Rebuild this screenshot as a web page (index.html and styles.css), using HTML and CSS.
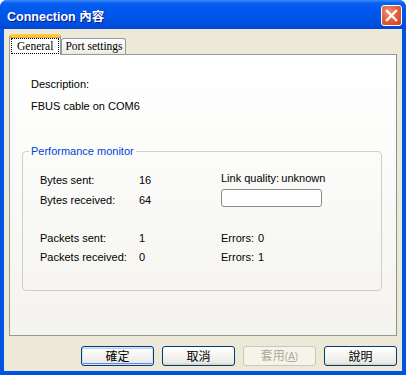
FILE: index.html
```html
<!DOCTYPE html>
<html lang="zh-Hant">
<head>
    <meta charset="UTF-8">
    <title>Connection 內容</title>
    <link rel="stylesheet" href="styles.css">
</head>
<body>

    <div class="window">
        <div class="titlebar">
            <span class="title">Connection 內容</span>
            <button class="close" aria-label="Close">
                <svg width="13" height="13" viewBox="0 0 13 13">
                    <path d="M2 2 L11 11 M11 2 L2 11" stroke="#fff" stroke-width="2.4" stroke-linecap="square"/>
                </svg>
            </button>
        </div>

        <div class="client">
            <div class="tabs">
                <div class="tab active"><span class="focus">General</span></div>
                <div class="tab">Port settings</div>
            </div>

            <div class="panel">
                <p class="line">Description:</p>
                <p class="line desc">FBUS cable on COM6</p>

                <fieldset class="group">
                    <legend>Performance monitor</legend>

                    <div class="section bytes">
                        <div class="pairs">
                            <span>Bytes sent:</span><span>16</span>
                            <span>Bytes received:</span><span>64</span>
                        </div>
                        <div class="quality">
                            <span>Link quality:&thinsp;unknown</span>
                            <div class="meter"></div>
                        </div>
                    </div>

                    <div class="section packets">
                        <div class="pairs">
                            <span>Packets sent:</span><span>1</span>
                            <span>Packets received:</span><span>0</span>
                        </div>
                        <div class="errors">
                            <span><span class="err-label">Errors:</span>0</span>
                            <span><span class="err-label">Errors:</span>1</span>
                        </div>
                    </div>
                </fieldset>
            </div>

            <div class="buttons">
                <button class="btn default">確定</button>
                <button class="btn">取消</button>
                <button class="btn" disabled>套用<span class="key">(<u>A</u>)</span></button>
                <button class="btn">說明</button>
            </div>
        </div>
    </div>

</body>
</html>
```

FILE: styles.css
```css
body {
    margin: 0;
    background: #fff;
    font-family: 'Liberation Sans', Arial, 'Noto Sans CJK TC', sans-serif;
    font-size: 11px;
    color: #000;
}

.window {
    width: 406px;
    height: 375px;
    display: flex;
    flex-direction: column;
    background: #0054e3;
    border-radius: 7px 7px 0 0;
    overflow: hidden;
}

.titlebar {
    height: 29px;
    flex: none;
    display: flex;
    align-items: center;
    justify-content: space-between;
    padding: 0 4px 0 7px;
    background: linear-gradient(#3d8dff 0, #0a5fef 3px, #0058ee 10px, #0054e3 20px, #0048d6 29px);
}

.title {
    color: #fff;
    font-family: 'Liberation Sans', Arial, 'Noto Sans CJK TC', sans-serif;
    font-weight: bold;
    font-size: 12.5px;
    text-shadow: 1px 1px 0 #0a1883;
    margin-top: 1px;
}

.close {
    width: 21px;
    height: 21px;
    padding: 0;
    margin-top: 1px;
    display: flex;
    align-items: center;
    justify-content: center;
    border: 1px solid #fff;
    border-radius: 3px;
    background: radial-gradient(circle at 35% 30%, #f39274 0, #e5603d 45%, #cc4420 100%);
}

.client {
    flex: 1;
    margin: 0 4px 4px;
    padding: 5px 5px 0;
    background: #ece9d8;
    display: flex;
    flex-direction: column;
}

/* tabs */

.tabs {
    display: flex;
    align-items: flex-end;
    height: 21px;
}

.tab {
    box-sizing: border-box;
    height: 17px;
    padding: 0 2px 0 3px;
    font-family: 'Liberation Serif', 'Times New Roman', serif;
    font-size: 11.5px;
    line-height: 15px;
    border: 1px solid #919b9c;
    border-bottom: none;
    border-radius: 3px 3px 0 0;
    background: linear-gradient(#fff, #f3f2ec 70%, #e6e4da);
}

.tab.active {
    position: relative;
    z-index: 1;
    height: 21px;
    padding: 2px 2px 0 2px;
    background: #fff;
    border-top: 3px solid #ffc83c;
    border-radius: 3px 3px 0 0;
    box-shadow: inset 0 1px 0 #e6a532;
}

.focus {
    display: inline-block;
    padding: 0 5px;
    line-height: 14px;
    outline: 1px dotted #000;
}

.panel {
    box-sizing: border-box;
    height: 282px;
    margin-top: -1px;
    padding: 23px 14px 0 21px;
    border: 1px solid #919b9c;
    border-right-color: #8a9192;
    background: linear-gradient(#fff 0, #fcfcfb 30%, #f4f3ee 100%);
}

.line {
    margin: 0;
    line-height: 13px;
}

.desc {
    margin-top: 9px;
}

/* performance group */

.group {
    margin: 32px 0 0 -9px;
    padding: 0 0 21px 17px;
    height: 146px;
    box-sizing: border-box;
    border: 1px solid #d0d0bf;
    border-radius: 4px;
}

.group legend {
    color: #0046d5;
    line-height: 13px;
    padding: 0 2px;
    margin-left: -11px;
}

.section {
    display: flex;
}

.bytes {
    margin-top: 12px;
}

.packets {
    margin-top: 19px;
}

.pairs {
    display: grid;
    grid-template-columns: 99px 82px;
    line-height: 20px;
}

.packets .pairs {
    line-height: 19px;
}

.quality {
    display: flex;
    flex-direction: column;
    line-height: 16px;
}

.meter {
    width: 101px;
    height: 18px;
    box-sizing: border-box;
    margin-top: 3px;
    border: 1px solid #8a8a8a;
    border-radius: 3px;
    background: #fff;
}

.errors {
    display: flex;
    flex-direction: column;
    line-height: 19px;
}

.err-label {
    display: inline-block;
    width: 37px;
}

/* dialog buttons */

.buttons {
    display: flex;
    justify-content: flex-end;
    gap: 8px;
    margin-top: 10px;
}

.btn {
    width: 73px;
    height: 20px;
    padding: 0;
    font-family: 'Noto Sans CJK TC', 'Liberation Sans', sans-serif;
    font-size: 12px;
    line-height: 16px;
    color: #000;
    border: 1px solid #003c74;
    border-radius: 3px;
    background: linear-gradient(#fff 0, #f5f4f0 50%, #ecebe6 85%, #d6d0c5 100%);
}

.btn.default {
    box-shadow: inset 0 0 0 1px #cee7ff, inset 0 -1px 0 1px #6982ee, inset 0 1px 0 1px #bccef7;
}

.btn:disabled {
    color: #aca899;
    border-color: #c9c7ba;
    background: #f5f4ea;
}

.key {
    font-family: 'Liberation Sans', sans-serif;
    font-size: 10px;
}
```
